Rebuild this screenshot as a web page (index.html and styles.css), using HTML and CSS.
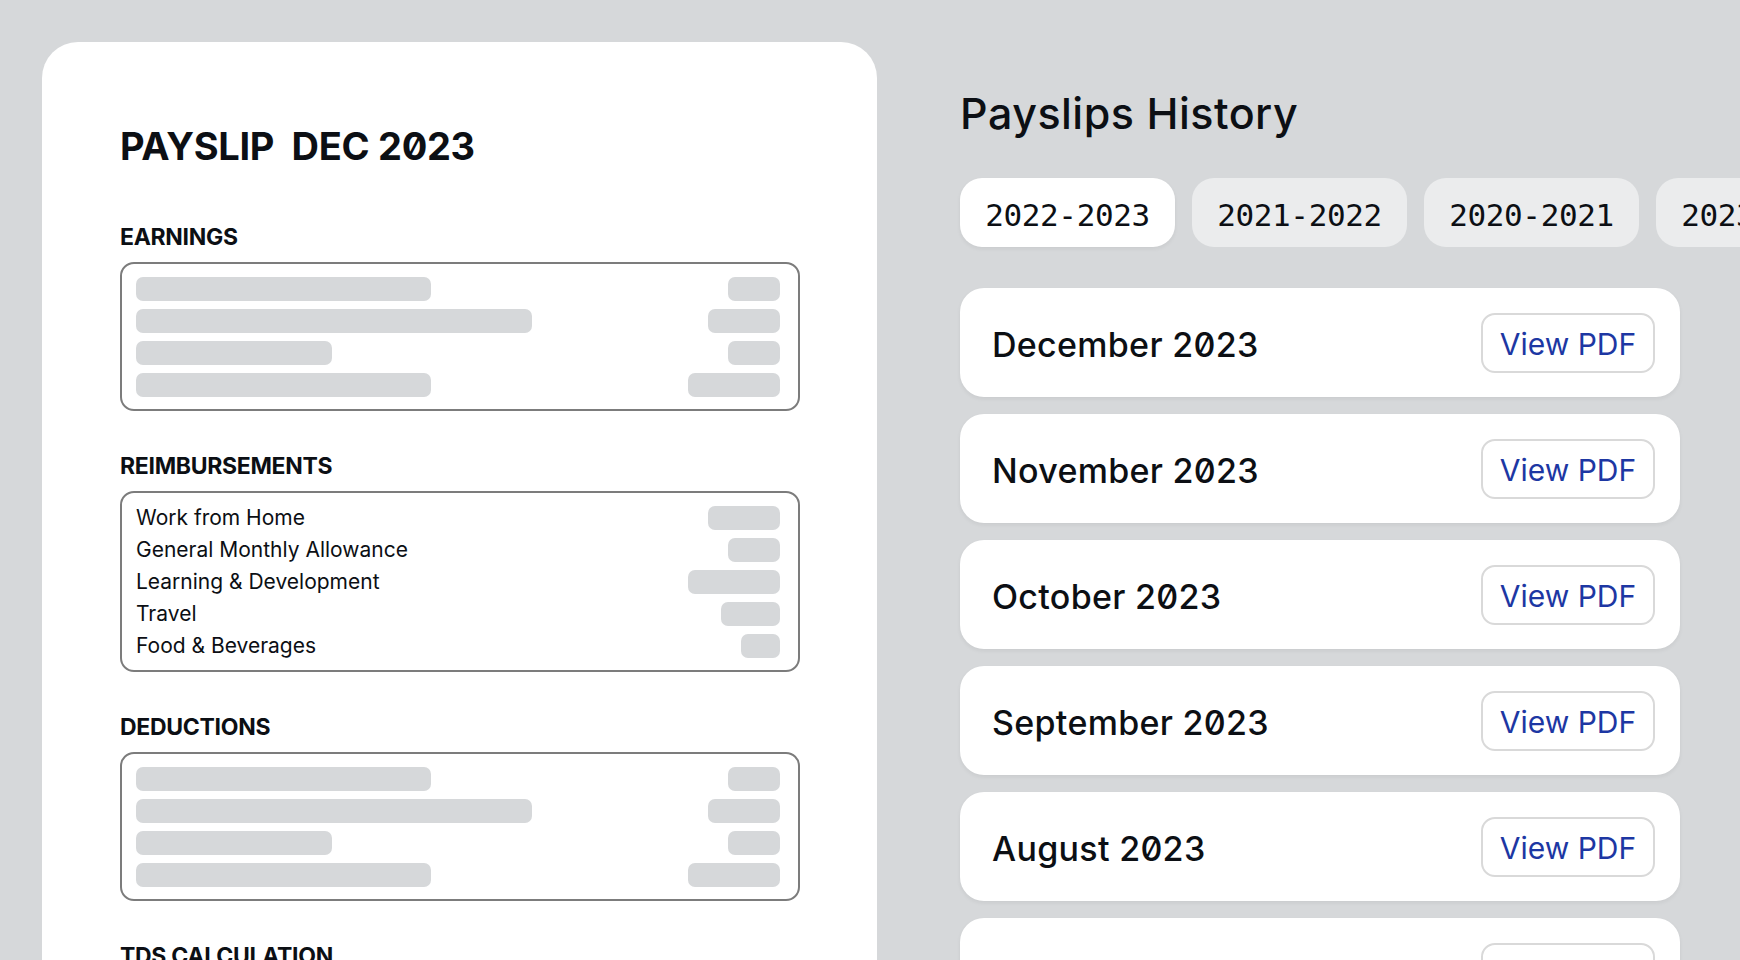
FILE: index.html
```html
<!DOCTYPE html>
<html lang="en">
<head>
  <meta charset="UTF-8">
  <meta name="viewport" content="width=device-width, initial-scale=1.0">
  <title>Payslips</title>
  <link rel="stylesheet" href="styles.css">
</head>
<body>
  <div class="page">
    <div class="slip">
      <h1 class="slip-title">PAYSLIP&nbsp;&nbsp;DEC 2023</h1>

      <div class="group">
        <h2>EARNINGS</h2>
        <div class="box">
          <div class="line"><span class="bar l1"></span><span class="bar r1"></span></div>
          <div class="line"><span class="bar l2"></span><span class="bar r2"></span></div>
          <div class="line"><span class="bar l3"></span><span class="bar r1"></span></div>
          <div class="line"><span class="bar l1"></span><span class="bar r3"></span></div>
        </div>
      </div>

      <div class="group">
        <h2>REIMBURSEMENTS</h2>
        <div class="box">
          <div class="line"><span class="label">Work from Home</span><span class="bar r2"></span></div>
          <div class="line"><span class="label">General Monthly Allowance</span><span class="bar r1"></span></div>
          <div class="line"><span class="label">Learning &amp; Development</span><span class="bar r3"></span></div>
          <div class="line"><span class="label">Travel</span><span class="bar r4"></span></div>
          <div class="line"><span class="label">Food &amp; Beverages</span><span class="bar r5"></span></div>
        </div>
      </div>

      <div class="group">
        <h2>DEDUCTIONS</h2>
        <div class="box">
          <div class="line"><span class="bar l1"></span><span class="bar r1"></span></div>
          <div class="line"><span class="bar l2"></span><span class="bar r2"></span></div>
          <div class="line"><span class="bar l3"></span><span class="bar r1"></span></div>
          <div class="line"><span class="bar l1"></span><span class="bar r3"></span></div>
        </div>
      </div>

      <div class="group">
        <h2>TDS CALCULATION</h2>
        <div class="box">
          <div class="line"><span class="bar l2"></span><span class="bar r2"></span></div>
          <div class="line"><span class="bar l1"></span><span class="bar r1"></span></div>
        </div>
      </div>
    </div>

    <div class="history">
      <h1 class="history-title">Payslips History</h1>

      <div class="tabs">
        <button class="tab active">2022-2023</button>
        <button class="tab">2021-2022</button>
        <button class="tab">2020-2021</button>
        <button class="tab">2023-2024</button>
      </div>

      <div class="months">
        <div class="month"><span class="month-name">December 2023</span><button class="pdf">View PDF</button></div>
        <div class="month"><span class="month-name">November 2023</span><button class="pdf">View PDF</button></div>
        <div class="month"><span class="month-name">October 2023</span><button class="pdf">View PDF</button></div>
        <div class="month"><span class="month-name">September 2023</span><button class="pdf">View PDF</button></div>
        <div class="month"><span class="month-name">August 2023</span><button class="pdf">View PDF</button></div>
        <div class="month"><span class="month-name">July 2023</span><button class="pdf">View PDF</button></div>
      </div>
    </div>
  </div>
</body>
</html>
```

FILE: styles.css
```css
html, body {
  margin: 0;
  height: 100%;
  overflow: hidden;
}

body {
  font-family: Inter, "Noto Sans", sans-serif;
  font-feature-settings: "zero" 1;
  background-color: #d6d8da;
  color: #0c0f14;
}

.page {
  display: flex;
  align-items: flex-start;
  gap: 83px;
  padding: 42px 0 0 42px;
}

/* left: payslip sheet */
.slip {
  flex-shrink: 0;
  width: 680px;
  padding: 81px 77px 60px 78px;
  background-color: #fff;
  border-radius: 36px;
}

.slip-title {
  margin: 0;
  font-size: 38px;
  line-height: 46px;
  font-weight: 700;
  letter-spacing: -0.3px;
}

.group {
  margin-top: 42px;
}

.slip-title + .group {
  margin-top: 55px;
}

.group h2 {
  margin: 0 0 11px;
  font-size: 23px;
  line-height: 27px;
  font-weight: 700;
  letter-spacing: -0.3px;
}

.box {
  display: flex;
  flex-direction: column;
  gap: 8px;
  padding: 13px 18px 12px 14px;
  border: 2px solid #7c7c7c;
  border-radius: 14px;
}

.line {
  display: flex;
  justify-content: space-between;
  align-items: center;
  height: 24px;
}

.label {
  font-size: 21px;
  line-height: 24px;
}

.bar {
  display: block;
  height: 24px;
  border-radius: 7px;
  background-color: #d6d8da;
}

.l1 { width: 295px; }
.l2 { width: 396px; }
.l3 { width: 196px; }
.r1 { width: 52px; }
.r2 { width: 72px; }
.r3 { width: 92px; }
.r4 { width: 59px; }
.r5 { width: 39px; }

/* right: history list */
.history {
  flex-shrink: 0;
  width: 720px;
  padding-top: 45px;
}

.history-title {
  margin: 0;
  font-size: 43px;
  line-height: 52px;
  font-weight: 500;
  letter-spacing: 0.5px;
}

.tabs {
  display: flex;
  gap: 17px;
  margin-top: 39px;
}

.tab {
  flex-shrink: 0;
  width: 215px;
  height: 69px;
  padding: 4px 0 0;
  border: none;
  border-radius: 22px;
  background-color: #ebeced;
  font-family: "DejaVu Sans Mono", "Liberation Mono", monospace;
  font-size: 31px;
  letter-spacing: -0.4px;
  color: #0c0f14;
}

.tab.active {
  background-color: #fff;
  box-shadow: 0 2px 4px rgba(0, 0, 0, 0.06);
}

.months {
  display: flex;
  flex-direction: column;
  gap: 17px;
  margin-top: 41px;
}

.month {
  display: flex;
  justify-content: space-between;
  align-items: center;
  height: 109px;
  padding: 0 25px 0 32px;
  background-color: #fff;
  border-radius: 24px;
  box-shadow: 0 2px 4px rgba(0, 0, 0, 0.06);
}

.month-name {
  padding-top: 4px;
  font-size: 34px;
  font-weight: 500;
  letter-spacing: 0.3px;
}

.pdf {
  width: 174px;
  height: 60px;
  padding: 2px 0 0;
  background-color: #fff;
  border: 2px solid #d9d9d9;
  border-radius: 14px;
  font-family: Inter, "Noto Sans", sans-serif;
  font-size: 30px;
  color: #1d37a3;
}
```
